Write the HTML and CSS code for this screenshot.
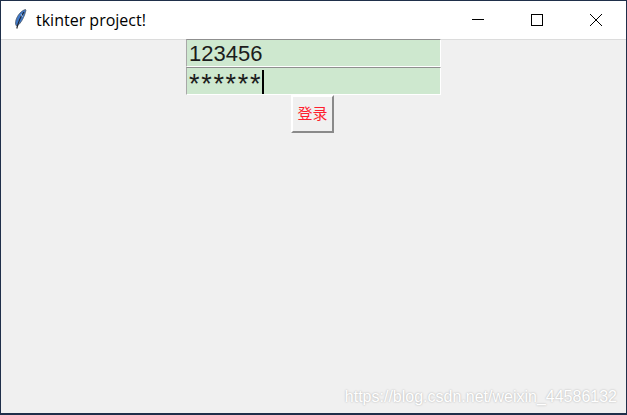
FILE: index.html
```html
<!DOCTYPE html>
<html lang="zh">
<head>
<meta charset="utf-8">
<title>tkinter project!</title>
<link rel="stylesheet" href="styles.css">
</head>
<body>
<div class="window">
  <header class="titlebar">
    <svg class="feather" width="16" height="24" viewBox="0 0 16 24">
      <path d="M13.500 1.500C9.500 2.500 5.500 7 4 12c-.6 2-.6 4 0 5.500l1.500.3C9 15 12.500 9 14 2z" fill="#3f78c8" stroke="#4a5564" stroke-width=".8"/>
      <path d="M12 4C9 8 6.500 13 4.800 20.500" fill="none" stroke="#20242c" stroke-width="1.200"/>
      <path d="M9 6l1.500 3" stroke="#a9c6ea" stroke-width="1"/>
    </svg>
    <span class="title">tkinter project!</span>
    <div class="controls">
      <span class="ctl"><svg width="12" height="12" viewBox="0 0 12 12"><path d="M0 5.500H12" stroke="#000" stroke-width="1"/></svg></span>
      <span class="ctl"><svg width="12" height="12" viewBox="0 0 12 12"><rect x=".5" y=".5" width="11" height="11" fill="none" stroke="#000"/></svg></span>
      <span class="ctl"><svg width="12" height="12" viewBox="0 0 12 12"><path d="M0 0L12 12M12 0L0 12" stroke="#000" stroke-width="1"/></svg></span>
    </div>
  </header>
  <main class="client">
    <div class="entry">123456</div>
    <div class="entry"><span class="stars">******</span><i class="caret"></i></div>
    <button class="login" type="button">登录</button>
    <div class="watermark">https://blog.csdn.net/weixin_44586132</div>
  </main>
</div>
</body>
</html>
```

FILE: styles.css
```css
* { box-sizing: border-box; }
html, body { margin: 0; height: 100%; }
body { background: #1f2f4a; overflow: hidden; }
.window {
  width: 627px;
  height: 415px;
  padding: 1px 1px 2px 1px;
  display: flex;
  flex-direction: column;
  font-family: "Noto Sans", "Liberation Sans", sans-serif;
}
.titlebar {
  height: 38px;
  flex: none;
  background: #fff;
  display: flex;
  align-items: center;
  padding-left: 11px;
  padding-right: 1px;
}
.feather { flex: none; }
.title {
  margin-left: 8px;
  font: 16px "Open Sans", "Noto Sans", sans-serif;
  color: #000;
}
.controls { margin-left: auto; display: flex; }
.ctl {
  width: 59px;
  height: 38px;
  display: flex;
  align-items: center;
  justify-content: center;
}
.client {
  flex: 1;
  position: relative;
  background: #f0f0f0;
  box-shadow: inset 0 1px #dcdcdc;
  padding-right: 1px;
  display: flex;
  flex-direction: column;
  align-items: center;
}
.entry {
  width: 255px;
  height: 28px;
  flex: none;
  margin-left: 1px;
  background: #cee8cf;
  border: 1px solid;
  border-color: #8f8f8f #fff #fff #a8a8a8;
  padding-left: 2px;
  font: 22px/28px "Liberation Sans", sans-serif;
  color: #1c1c1c;
  display: flex;
  white-space: pre;
}
.stars {
  font-size: 27px;
  line-height: 32px;
  letter-spacing: 1.700px;
}
.caret {
  width: 2px;
  height: 24px;
  background: #000;
  margin-top: 2px;
}
.login {
  width: 43px;
  height: 38px;
  flex: none;
  margin-right: 1px;
  padding: 0 0 3px;
  background: #f0f0f0;
  border: 2px solid;
  border-color: #fff #8a8a8a #8a8a8a #fff;
  color: #ff1f2f;
  font: 15px "Noto Sans CJK SC", sans-serif;
}
.watermark {
  position: absolute;
  right: 9px;
  bottom: 7px;
  font: 16px "Liberation Sans", sans-serif;
  color: #fff;
  text-shadow: 0 0 2px rgba(0, 0, 0, .3);
  white-space: nowrap;
}
```
